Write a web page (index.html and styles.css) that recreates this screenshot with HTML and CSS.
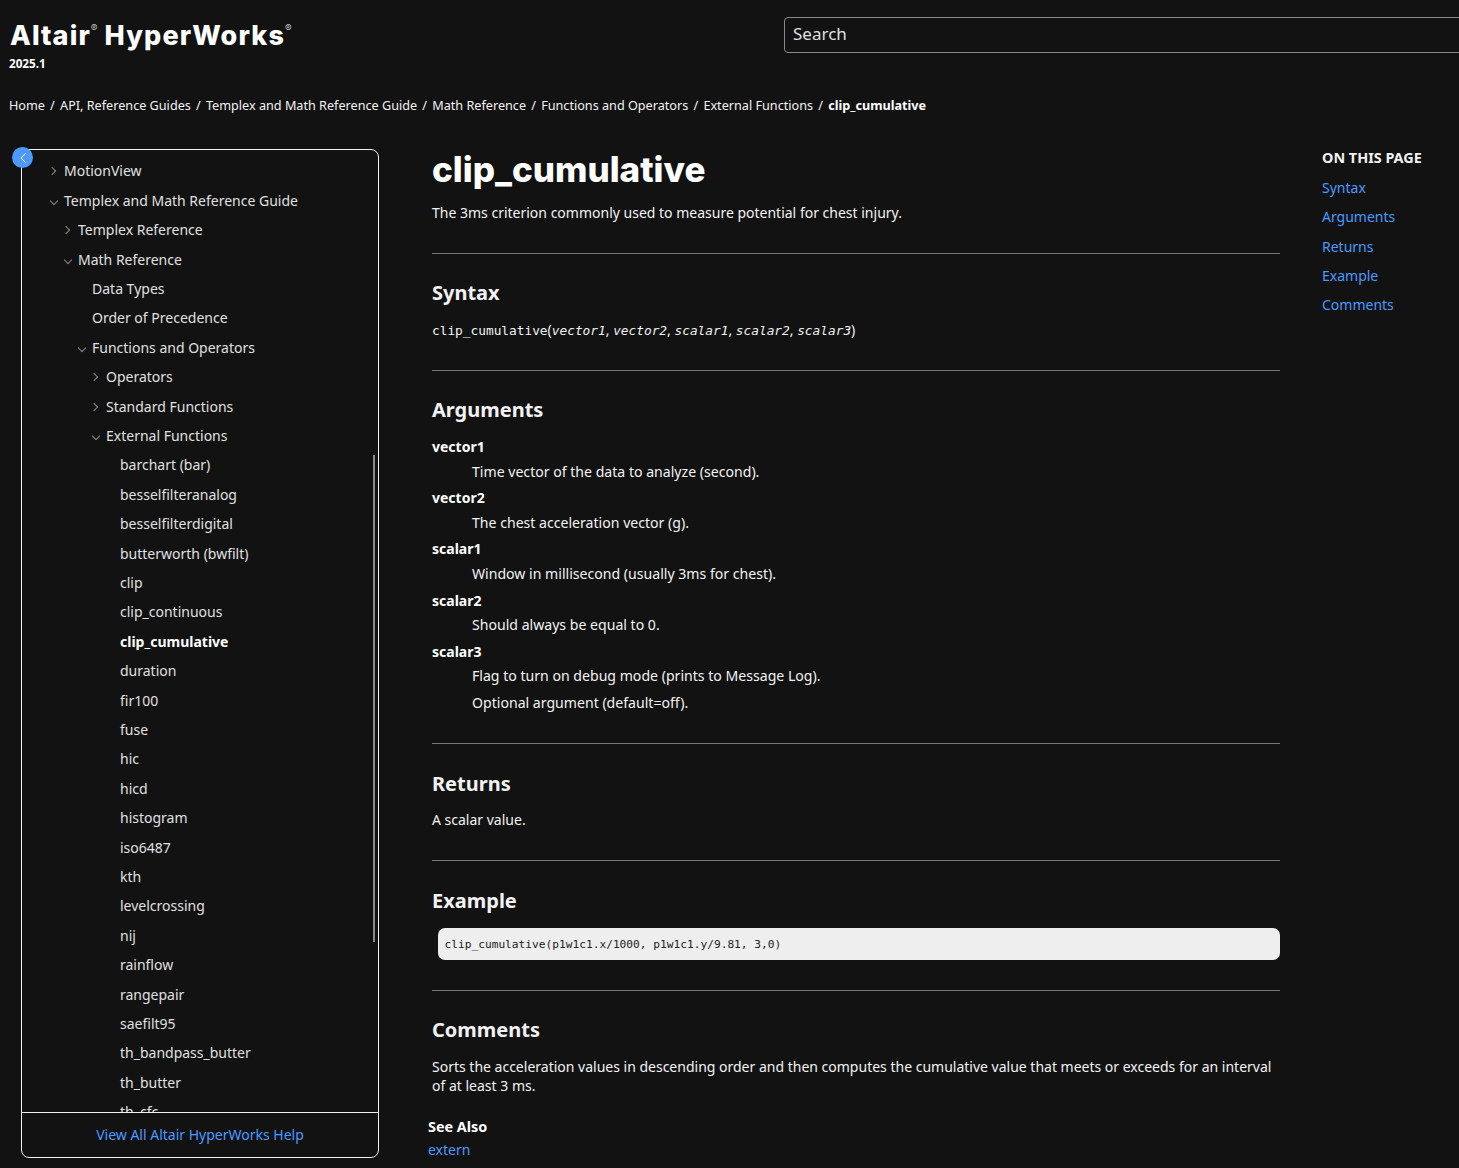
FILE: index.html
```html
<!DOCTYPE html>
<html lang="en">
<head>
    <meta charset="UTF-8" />
    <title>clip_cumulative</title>
    <link rel="stylesheet" href="styles.css">
</head>

<body>
    <header class="top-bar">
        <div class="brand">
            <div class="brand-name">Altair<sup>®</sup> HyperWorks<sup>®</sup></div>
            <div class="brand-version">2025.1</div>
        </div>
        <input class="search-box" type="text" placeholder="Search" />
    </header>

    <nav class="breadcrumbs">
        <a href="#">Home</a><span class="sep">/</span>
        <a href="#">API, Reference Guides</a><span class="sep">/</span>
        <a href="#">Templex and Math Reference Guide</a><span class="sep">/</span>
        <a href="#">Math Reference</a><span class="sep">/</span>
        <a href="#">Functions and Operators</a><span class="sep">/</span>
        <a href="#">External Functions</a><span class="sep">/</span>
        <strong>clip_cumulative</strong>
    </nav>

    <div class="page">
        <aside class="sidebar">
            <button class="collapse-button">
                <svg width="10" height="12" viewBox="0 0 10 12"><path d="M7.5 1.5 L3 6 L7.5 10.5" fill="none" stroke="#ffffff" stroke-width="1"/></svg>
            </button>
            <div class="tree">
                <ul>
                    <li class="lvl0"><span class="arrow right"></span>MotionView</li>
                    <li class="lvl0"><span class="arrow down"></span>Templex and Math Reference Guide</li>
                    <li class="lvl1"><span class="arrow right"></span>Templex Reference</li>
                    <li class="lvl1"><span class="arrow down"></span>Math Reference</li>
                    <li class="lvl2">Data Types</li>
                    <li class="lvl2">Order of Precedence</li>
                    <li class="lvl2"><span class="arrow down"></span>Functions and Operators</li>
                    <li class="lvl3"><span class="arrow right"></span>Operators</li>
                    <li class="lvl3"><span class="arrow right"></span>Standard Functions</li>
                    <li class="lvl3"><span class="arrow down"></span>External Functions</li>
                    <li class="lvl4">barchart (bar)</li>
                    <li class="lvl4">besselfilteranalog</li>
                    <li class="lvl4">besselfilterdigital</li>
                    <li class="lvl4">butterworth (bwfilt)</li>
                    <li class="lvl4">clip</li>
                    <li class="lvl4">clip_continuous</li>
                    <li class="lvl4 current">clip_cumulative</li>
                    <li class="lvl4">duration</li>
                    <li class="lvl4">fir100</li>
                    <li class="lvl4">fuse</li>
                    <li class="lvl4">hic</li>
                    <li class="lvl4">hicd</li>
                    <li class="lvl4">histogram</li>
                    <li class="lvl4">iso6487</li>
                    <li class="lvl4">kth</li>
                    <li class="lvl4">levelcrossing</li>
                    <li class="lvl4">nij</li>
                    <li class="lvl4">rainflow</li>
                    <li class="lvl4">rangepair</li>
                    <li class="lvl4">saefilt95</li>
                    <li class="lvl4">th_bandpass_butter</li>
                    <li class="lvl4">th_butter</li>
                    <li class="lvl4">th_cfc</li>
                </ul>
                <div class="scroll-thumb"></div>
            </div>
            <div class="sidebar-footer"><a href="#">View All Altair HyperWorks Help</a></div>
        </aside>

        <main class="content">
            <h1>clip_cumulative</h1>
            <p class="lead">The 3ms criterion commonly used to measure potential for chest injury.</p>

            <section class="syntax">
                <h2>Syntax</h2>
                <p class="signature"><code>clip_cumulative</code>(<code><em>vector1</em></code>, <code><em>vector2</em></code>, <code><em>scalar1</em></code>, <code><em>scalar2</em></code>, <code><em>scalar3</em></code>)</p>
            </section>

            <section class="arguments">
                <h2>Arguments</h2>
                <dl>
                    <dt>vector1</dt>
                    <dd>Time vector of the data to analyze (second).</dd>
                    <dt>vector2</dt>
                    <dd>The chest acceleration vector (g).</dd>
                    <dt>scalar1</dt>
                    <dd>Window in millisecond (usually 3ms for chest).</dd>
                    <dt>scalar2</dt>
                    <dd>Should always be equal to 0.</dd>
                    <dt>scalar3</dt>
                    <dd class="flag">Flag to turn on debug mode (prints to Message Log).</dd>
                    <dd class="second">Optional argument (default=off).</dd>
                </dl>
            </section>

            <section class="returns">
                <h2>Returns</h2>
                <p>A scalar value.</p>
            </section>

            <section class="example">
                <h2>Example</h2>
                <pre class="code-block">clip_cumulative(p1w1c1.x/1000, p1w1c1.y/9.81, 3,0)</pre>
            </section>

            <section class="comments">
                <h2>Comments</h2>
                <p>Sorts the acceleration values in descending order and then computes the cumulative value that meets or exceeds for an interval of at least 3 ms.</p>
            </section>

            <div class="see-also">
                <div class="see-also-title">See Also</div>
                <a href="#">extern</a>
            </div>
        </main>

        <aside class="toc">
            <div class="toc-title">ON THIS PAGE</div>
            <a href="#">Syntax</a>
            <a href="#">Arguments</a>
            <a href="#">Returns</a>
            <a href="#">Example</a>
            <a href="#">Comments</a>
        </aside>
    </div>
</body>
</html>
```

FILE: styles.css
```css
html, body {
    height: 1168px;
    overflow: hidden;
}

body {
    margin: 0;
    background-color: #121212;
    color: #f2f2f2;
    font-family: 'Noto Sans', sans-serif;
    font-size: 14px;
}

a {
    color: #4c9aff;
    text-decoration: none;
}

/* top */
.top-bar {
    display: flex;
    justify-content: space-between;
    height: 87px;
    padding: 17px 0 0 10px;
    box-sizing: border-box;
}

.brand-name {
    font-family: Inter, sans-serif;
    font-weight: 800;
    font-size: 27px;
    letter-spacing: 1.12px;
    line-height: 37px;
    color: #ffffff;
}

.brand-name sup {
    font-size: 10px;
    font-weight: 400;
    letter-spacing: 0;
    vertical-align: 13px;
    line-height: 0;
    color: #bbbbbb;
}

.brand-version {
    margin-left: -1px;
    font-size: 11.7px;
    font-weight: 700;
    line-height: 18px;
    color: #ffffff;
}

.search-box {
    width: 700px;
    height: 36px;
    margin-right: -25px;
    box-sizing: border-box;
    padding: 0 8px 4px;
    background: transparent;
    border: 1px solid #8a8a8a;
    border-radius: 4px;
    font-family: 'Noto Sans', sans-serif;
    font-size: 17px;
}

.search-box::placeholder {
    color: #e0e0e0;
    opacity: 1;
}

.breadcrumbs {
    height: 62px;
    padding: 8px 0 0 9px;
    box-sizing: border-box;
    font-size: 12.65px;
    line-height: 20px;
}

.breadcrumbs a {
    color: #f2f2f2;
}

.breadcrumbs strong {
    color: #ffffff;
}

.sep {
    margin: 0 2px 0 5.1px;
    color: #f2f2f2;
}

.page {
    display: flex;
    align-items: flex-start;
}

/* left tree */
.sidebar {
    position: relative;
    width: 358px;
    height: 1009px;
    margin-left: 21px;
    box-sizing: border-box;
    border: 1px solid #f2f2f2;
    border-radius: 8px;
    display: flex;
    flex-direction: column;
    flex-shrink: 0;
}

.collapse-button {
    position: absolute;
    top: -3px;
    left: -10px;
    width: 21px;
    height: 21px;
    padding: 0;
    border: none;
    border-radius: 50%;
    background-color: #4c9aff;
    display: flex;
    align-items: center;
    justify-content: center;
}

.tree {
    position: relative;
    flex: 1;
    overflow: hidden;
    padding-top: 6.3px;
}

.tree ul {
    list-style: none;
    margin: 0;
    padding: 0;
}

.tree li {
    position: relative;
    line-height: 29.4px;
    color: #e0e0e0;
}

.lvl0 { padding-left: 42px; }
.lvl1 { padding-left: 56px; }
.lvl2 { padding-left: 70px; }
.lvl3 { padding-left: 84px; }
.lvl4 { padding-left: 98px; }

.tree li.current {
    color: #ffffff;
    font-weight: 700;
}

.arrow {
    display: inline-block;
    width: 6px;
    height: 6px;
    margin-left: -15px;
    margin-right: 9px;
    border-right: 1px solid #888888;
    border-bottom: 1px solid #888888;
    box-sizing: border-box;
    vertical-align: 2px;
}

.arrow.right { transform: rotate(-45deg); }
.arrow.down { transform: rotate(45deg); margin-left: -13.5px; margin-right: 7.5px; }

.scroll-thumb {
    position: absolute;
    right: 3px;
    top: 305px;
    width: 2px;
    height: 487px;
    background-color: #8a8a8a;
}

.sidebar-footer {
    height: 44px;
    border-top: 1px solid #f2f2f2;
    text-align: center;
    line-height: 44px;
    flex-shrink: 0;
}

/* main article */
.content {
    width: 848px;
    margin-left: 53px;
    flex-shrink: 0;
    line-height: 20px;
}

.content h1 {
    margin: 0;
    font-family: Inter, sans-serif;
    font-weight: 800;
    font-size: 35px;
    line-height: 40px;
    color: #ffffff;
}

.content p {
    margin: 0;
}

.lead {
    padding-top: 14px;
}

.content section {
    border-top: 1px solid #777777;
    margin-top: 30px;
    padding-top: 24px;
}

.content h2 {
    margin: 0;
    font-size: 20px;
    font-weight: 700;
    line-height: 30px;
    color: #f2f2f2;
}

.signature {
    padding-top: 12px;
}

code {
    font-family: 'DejaVu Sans Mono', monospace;
    font-size: 12.8px;
}

.content .arguments {
    margin-top: 29px;
}

.arguments dl {
    margin: 10.75px 0 0;
}

.arguments dt {
    font-weight: 700;
    line-height: 22px;
    color: #ffffff;
}

.arguments dd {
    margin: 2.75px 0 4.5px 40px;
    line-height: 22px;
    font-size: 14.1px;
}

.arguments dd.flag {
    margin-top: 2.25px;
}

.arguments dd.second {
    margin-top: 5px;
    margin-bottom: 5px;
}

.content .returns {
    margin-top: 28.5px;
    padding-top: 25px;
}

.returns p {
    padding-top: 11px;
}

.content .example {
    padding-top: 25px;
}

.code-block {
    margin: 12px 0 0 6px;
    height: 32px;
    padding: 0 6.5px;
    background-color: #eeeeee;
    border-radius: 7px;
    color: #222222;
    font-family: 'DejaVu Sans Mono', monospace;
    font-size: 11.2px;
    line-height: 33px;
}

.comments p {
    padding-top: 12px;
    line-height: 19px;
}

.see-also {
    margin: 20px 0 0 -4px;
    line-height: 23px;
}

.see-also-title {
    font-weight: 700;
    font-size: 14.4px;
    color: #ffffff;
}

/* right column */
.toc {
    margin-left: 42px;
    padding-top: 0;
    display: flex;
    flex-direction: column;
}

.toc-title {
    font-weight: 700;
    font-size: 14.4px;
    line-height: 18px;
    color: #f2f2f2;
    margin-bottom: 6px;
    white-space: nowrap;
}

.toc a {
    line-height: 29.3px;
}
```
